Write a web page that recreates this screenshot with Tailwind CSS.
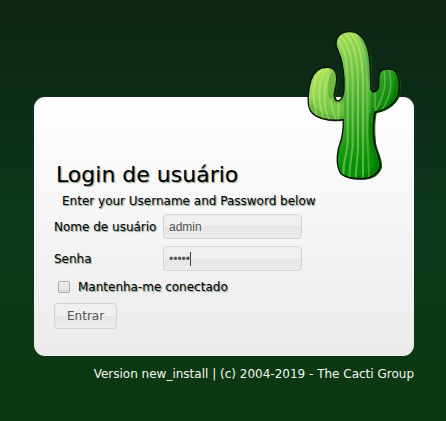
<!DOCTYPE html>
<html lang="pt-BR">
<head>
<meta charset="utf-8">
<meta name="viewport" content="width=device-width, initial-scale=1">
<title>Login de usuário</title>
<script src="https://cdn.jsdelivr.net/npm/@tailwindcss/browser@4"></script>
</head>
<body class="min-h-screen bg-linear-to-b from-[#0d2415] via-[#0c381b] to-[#0a390e] font-['DejaVu_Sans',sans-serif] text-xs text-black">
<div class="mx-auto max-w-[446px] pt-[97px] pr-8 pl-[34px]">
  <main class="relative rounded-[11px] bg-linear-to-b from-white to-[#ebebeb] px-5 pt-16 pb-[27px] [text-shadow:1px_1px_1px_#0a3d1c80]">
    <svg class="absolute -top-[67px] right-[10px] h-[152px] w-[99px]" viewBox="915 92 297 456" aria-hidden="true">
      <defs>
        <linearGradient id="body" x1="1000" y1="100" x2="1100" y2="480" gradientUnits="userSpaceOnUse">
          <stop offset="0" stop-color="#a5df55"/><stop offset=".45" stop-color="#59b837"/><stop offset="1" stop-color="#079006"/>
        </linearGradient>
        <linearGradient id="left" x1="945" y1="210" x2="1030" y2="355" gradientUnits="userSpaceOnUse">
          <stop offset="0" stop-color="#b2e65c"/><stop offset="1" stop-color="#63bd3c"/>
        </linearGradient>
        <linearGradient id="right" x1="1120" y1="230" x2="1195" y2="290" gradientUnits="userSpaceOnUse">
          <stop offset="0" stop-color="#35a729"/><stop offset="1" stop-color="#078507"/>
        </linearGradient>
        <path id="outline" d="M1009 139C1004 113 1023 97 1048 97C1081 97 1099 125 1106 163C1113 200 1111 242 1113 270C1117 282 1130 279 1135 265C1139 250 1133 231 1140 219C1149 207 1177 206 1188 217C1199 233 1200 268 1195 286C1185 314 1157 333 1125 338C1119 360 1119 401 1123 432C1130 460 1141 477 1141 502C1133 524 1117 537 1084 538C1057 538 1029 536 1019 517C1010 500 1011 470 1015 448C1021 429 1031 415 1030 360C992 368 944 357 931 334C921 315 923 273 933 243C943 214 964 201 990 205C1010 210 1014 234 1008 258C1002 284 999 296 1009 304C1021 309 1031 293 1032 268C1034 231 1028 184 1016 160Z"/>
        <clipPath id="shape"><use href="#outline"/></clipPath>
      </defs>
      <use href="#outline" transform="translate(4 2)" fill="#174b08" stroke="#174b08" stroke-width="3"/>
      <use href="#outline" fill="url(#body)"/>
      <g clip-path="url(#shape)" fill="none">
        <path d="M915 195H1031V365H915Z" fill="url(#left)"/>
        <path d="M1112 285L1130 205H1205V345H1112Z" fill="url(#right)"/>
        <path d="M992 205C984 240 979 283 990 303C1001 318 1025 314 1033 304L1034 250L1010 210Z" fill="#4b9f31" fill-opacity=".5"/>
        <path d="M935 300C943 343 991 351 1033 349V370H925Z" fill="#48a032" fill-opacity=".45"/>
        <path d="M1064 97C1089 126 1094 160 1097 225L1116 270V170L1085 98Z" fill="#3c9e54" fill-opacity=".5"/>
        <path d="M1180 208C1192 233 1183 286 1173 300C1153 320 1131 325 1117 327V350H1208V210Z" fill="#087407" fill-opacity=".65"/>
        <path d="M1108 340C1104 385 1103 426 1117 460C1132 492 1120 514 1095 523L1060 532V545H1150V420L1125 338Z" fill="#077407" fill-opacity=".65"/>
        <g stroke="#d4f3a5" stroke-opacity=".38" stroke-width="6">
          <path d="M1014 120C1036 147 1042 191 1043 260V430C1042 465 1028 480 1030 532"/>
          <path d="M1021 108C1050 140 1057 186 1058 250V430C1058 465 1048 490 1048 540"/>
          <path d="M1032 99C1066 131 1073 180 1074 250V440C1074 480 1067 500 1067 540"/>
          <path d="M1048 97C1081 130 1087 180 1089 250V535"/>
          <path d="M1064 99C1094 135 1100 185 1102 250V410C1102 450 1107 485 1107 535" stroke-opacity=".25"/>
          <path stroke-width="5" d="M969 209C931 238 937 300 951 348M984 205C949 239 955 309 970 357M998 212C965 252 968 325 989 362M995 297C991 318 1000 343 1008 362M1015 306V362"/>
          <path stroke-width="5" d="M1151 211C1160 249 1156 286 1126 335M1166 208C1179 254 1171 296 1145 331M1125 277V337" stroke-opacity=".3"/>
        </g>
      </g>
      <use href="#outline" fill="none" stroke="#071206" stroke-width="4" stroke-linejoin="round"/>
    </svg>
    <h1 class="pl-[2px] text-[22px] leading-7">Login de usuário</h1>
    <p class="mt-1 pl-2 leading-4">Enter your Username and Password below</p>
    <form onsubmit="return false">
      <div class="mt-[5px] grid grid-cols-[103px_minmax(0,139px)] items-center gap-x-[6px] gap-y-[7px]">
        <label for="user" class="whitespace-nowrap">Nome de usuário</label>
        <input id="user" type="text" value="admin" class="h-[25px] w-full rounded border border-[#d3d3d3] bg-linear-to-b from-[#efefef] from-50% to-[#ececec] via-[#e5e5e5] via-50% px-[5px] font-['Liberation_Sans',sans-serif] text-xs text-[#555] outline-none [text-shadow:none]">
        <label for="pass">Senha</label>
        <div class="relative">
          <input id="pass" type="password" value="admin" class="block h-[25px] w-full rounded border border-[#d3d3d3] bg-linear-to-b from-[#efefef] from-50% to-[#ececec] via-[#e5e5e5] via-50% px-[5px] font-['Liberation_Sans',sans-serif] text-xs text-[#555] caret-transparent outline-none [text-shadow:none]">
          <span class="pointer-events-none absolute top-[6px] left-[27px] h-[14px] w-px bg-[#444]"></span>
        </div>
      </div>
      <div class="mt-2 flex items-center gap-2 pl-1">
        <input id="keep" type="checkbox" class="size-3 appearance-none rounded-xs border border-[#a9a9a9] bg-linear-to-b from-[#eee] to-[#ddd]">
        <label for="keep" class="leading-4">Mantenha-me conectado</label>
      </div>
      <button type="submit" class="mt-2 h-[26px] rounded border border-[#d3d3d3] bg-linear-to-b from-[#efefef] from-50% to-[#eee] via-[#e5e5e5] via-50% px-3 text-[#555] [text-shadow:none]">Entrar</button>
    </form>
  </main>
  <footer class="mt-[10px] text-right leading-4 text-[#f5f5f5]">Version new_install | (c) 2004-2019 - The Cacti Group</footer>
</div>
</body>
</html>
